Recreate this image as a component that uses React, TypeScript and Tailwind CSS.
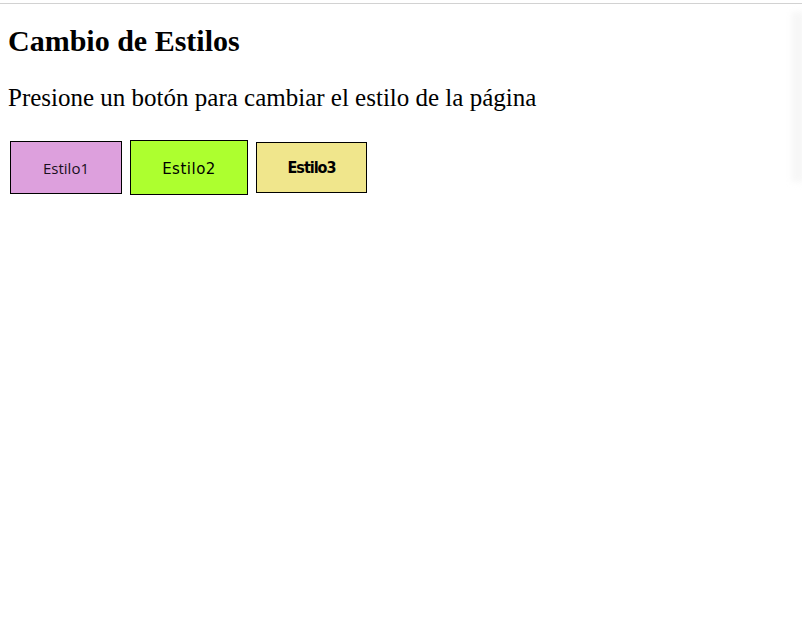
export default function App() {
  return (
    <div className="relative w-[802px] h-[641px] bg-white overflow-hidden">
      <div className="mt-[3px] border-t border-[#d2d2d2]" />
      <div className="absolute right-0 top-[12px] w-[14px] h-[170px] bg-gradient-to-r from-transparent to-[#f1f1f1] blur-[3px]" />
      <div className="flex flex-col pl-[8px]">
        <h2 className="mt-[20px] text-[30px] font-bold text-black leading-[34px]" style={{ fontFamily: '"Liberation Serif", "Times New Roman", serif' }}>
          Cambio de Estilos
        </h2>
        <p className="mt-[25px] text-[25px] text-black leading-[29px]" style={{ fontFamily: '"Liberation Serif", "Times New Roman", serif' }}>
          Presione un botón para cambiar el estilo de la página
        </p>
        <div className="mt-[28px] ml-[2px] flex items-center gap-[8px] h-[55px]">
          <button className="w-[112px] h-[53px] bg-[#dda0dd] border border-black text-[15px] text-[#1a1020] flex items-center justify-center pt-[1px]" style={{ fontFamily: '"Open Sans", "DejaVu Sans", sans-serif' }}>
            Estilo1
          </button>
          <button className="w-[118px] h-[55px] bg-[#adff2f] border border-black text-[15px] text-black flex items-center justify-center tracking-[0.5px] pt-[3px]" style={{ fontFamily: '"DejaVu Sans", sans-serif' }}>
            Estilo2
          </button>
          <button className="w-[111px] h-[51px] bg-[#f0e68c] border border-black text-[16px] font-bold text-black flex items-center justify-center tracking-[-1px]" style={{ fontFamily: '"DejaVu Sans Condensed", "Liberation Sans Narrow", sans-serif' }}>
            Estilo3
          </button>
        </div>
      </div>
    </div>
  );
}
